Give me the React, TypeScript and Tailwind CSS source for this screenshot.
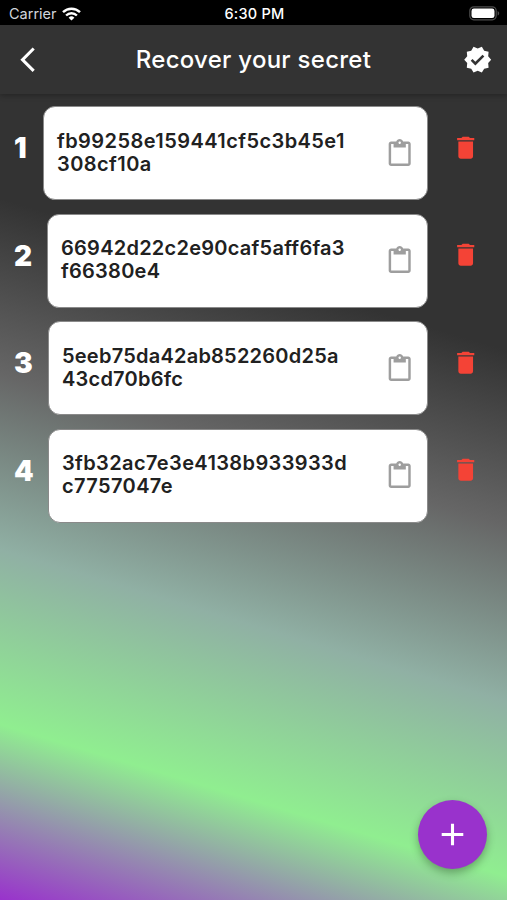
import { MdAdd, MdArrowBackIosNew, MdContentPaste, MdDelete, MdVerified } from "react-icons/md";

const shares = [
  { id: 1, lines: ["fb99258e159441cf5c3b45e1", "308cf10a"], indent: "w-[29px]", tracking: "tracking-[0.43px]" },
  { id: 2, lines: ["66942d22c2e90caf5aff6fa3", "f66380e4"], indent: "w-[33px]", tracking: "tracking-[0.25px]" },
  { id: 3, lines: ["5eeb75da42ab852260d25a", "43cd70b6fc"], indent: "w-[34px]", tracking: "tracking-[0.23px]" },
  { id: 4, lines: ["3fb32ac7e3e4138b933933d", "c7757047e"], indent: "w-[34px]", tracking: "tracking-[0.38px]" },
];

function StatusBar() {
  return (
    <div className="grid h-[25px] grid-cols-3 items-center bg-black pt-[3px] pr-[7px] pl-[9px] text-white">
      <div className="flex items-center gap-[5px]">
        <span className="text-[14.5px] leading-5 text-gray-300">Carrier</span>
        <svg width="19" height="14" viewBox="0 0 19 14" fill="none" stroke="white" strokeWidth="2.4">
          <path d="M1 5.2a12.2 12.2 0 0 1 17 0" />
          <path d="M4.1 8.5a7.7 7.7 0 0 1 10.8 0" />
          <path d="M9.5 13.6 6.6 10.7a4.2 4.2 0 0 1 5.8 0z" fill="white" stroke="none" />
        </svg>
      </div>
      <span className="text-center text-[14.5px] leading-5 font-medium tracking-[0.25px] whitespace-nowrap">
        6:30 PM
      </span>
      <svg className="-mt-[2px] justify-self-end" width="31" height="15" viewBox="0 0 31 15">
        <rect x="0.8" y="0.8" width="26.4" height="13" rx="4" fill="none" stroke="#4d4d4d" strokeWidth="1.2" />
        <rect x="2.5" y="2.5" width="23" height="9.6" rx="2.4" fill="white" />
        <path d="M28.6 5v4.6c1-.4 1.6-1.3 1.6-2.3S29.6 5.4 28.6 5z" fill="#4d4d4d" />
      </svg>
    </div>
  );
}

function Header() {
  return (
    <header className="relative flex h-[69px] items-center justify-between bg-[#333333] pr-[15px] pl-[13px] text-white shadow-[0_2px_5px_rgba(0,0,0,0.25)]">
      <button aria-label="Back">
        <MdArrowBackIosNew className="size-[29.4px]" />
      </button>
      <h1 className="pl-[2px] text-[24px] leading-8 font-medium tracking-[0.27px]">Recover your secret</h1>
      <button aria-label="Verify">
        <MdVerified className="size-[29.4px]" />
      </button>
    </header>
  );
}

export default function App() {
  return (
    <div className="flex h-[900px] w-[507px] flex-col overflow-hidden bg-[linear-gradient(196.7deg,#333333_0%,#333333_33.3%,#666666_50%,#90b0a4_66.7%,#90ee90_83.3%,#9932cc_100%)] font-['Inter',sans-serif]">
      <StatusBar />
      <Header />

      {/* Share list */}
      <main className="flex flex-1 flex-col gap-[13.5px] pt-3 pl-[14px]">
        {shares.map((share) => (
          <div key={share.id} className="flex h-[94px] shrink-0">
            <div className={`${share.indent} shrink-0 pt-[26px] text-[28px] leading-8 font-black text-white`}>
              {share.id}
            </div>
            <div className="flex flex-1 rounded-[12px] border border-[#8a8a8a] bg-white pt-[22.5px] pl-[13px]">
              <p className={`flex-1 text-[20px] leading-[23px] font-semibold text-[#212121] ${share.tracking}`}>
                {share.lines[0]}
                <br />
                {share.lines[1]}
              </p>
              <button aria-label="Paste" className="mt-[9px] mr-[13px] h-[30px]">
                <MdContentPaste className="size-[29.4px] text-[#9e9e9e]" />
              </button>
            </div>
            <button aria-label="Delete" className="w-[79px] shrink-0 pr-[4px] pb-[11.5px]">
              <MdDelete className="mx-auto size-[29.4px] text-[#f44336]" />
            </button>
          </div>
        ))}
      </main>

      <footer className="flex shrink-0 justify-end pr-[20px] pb-[31.5px]">
        <button
          aria-label="Add share"
          className="flex size-[68.6px] items-center justify-center rounded-full bg-[#9932cc] text-white shadow-[0_4px_8px_rgba(0,0,0,0.3)]"
        >
          <MdAdd className="size-[37px]" />
        </button>
      </footer>
    </div>
  );
}
